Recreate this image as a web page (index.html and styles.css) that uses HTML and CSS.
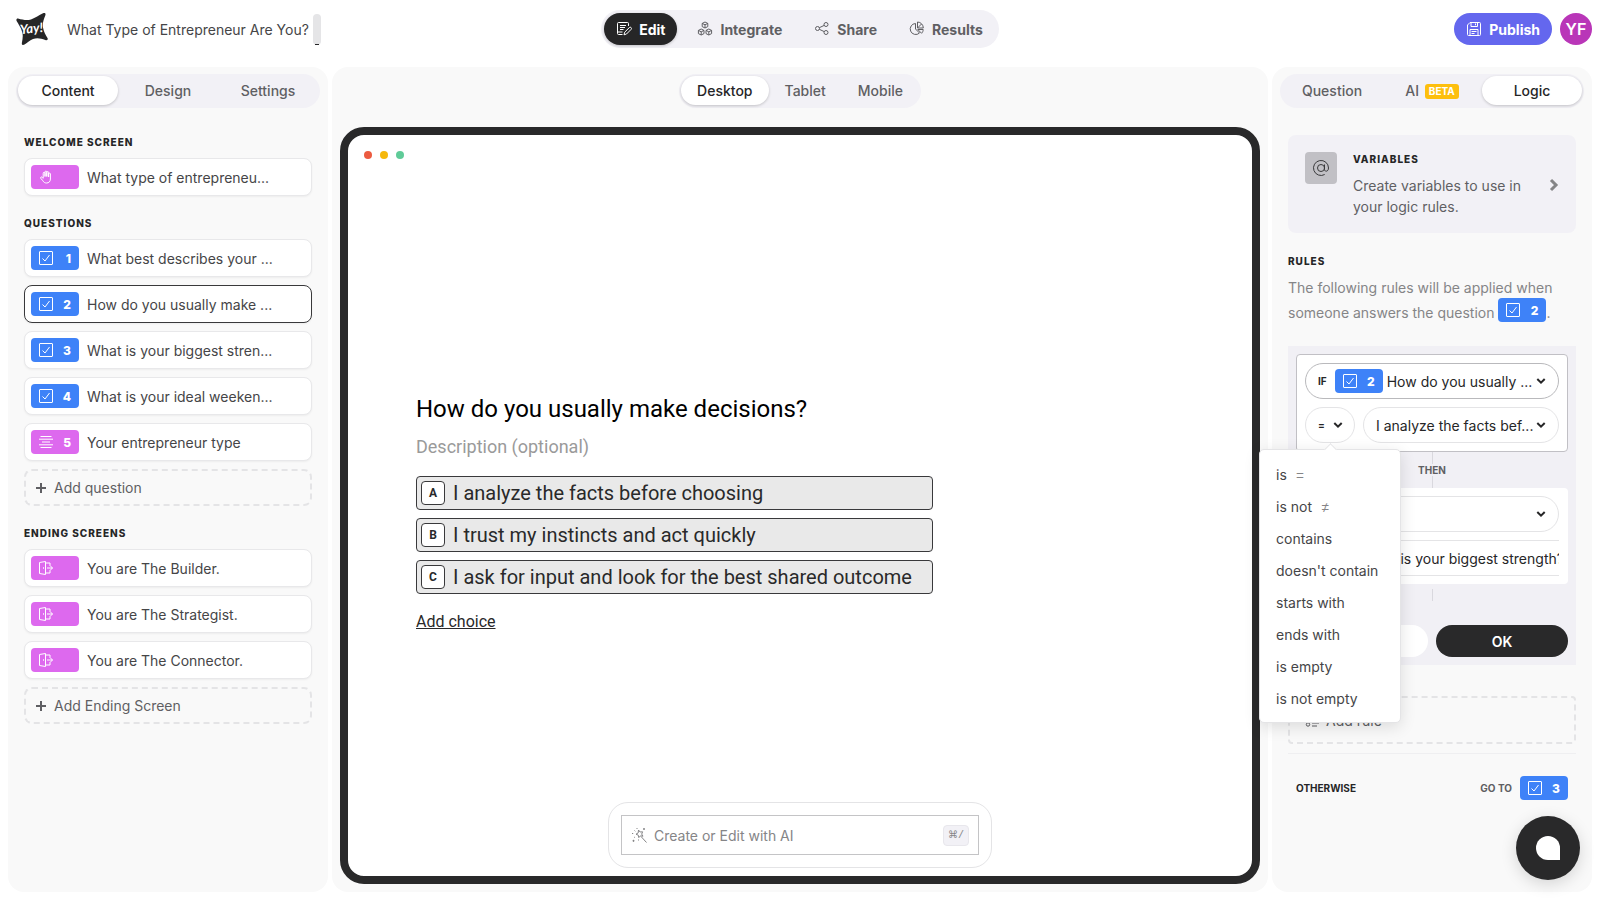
FILE: index.html
```html
<!DOCTYPE html>
<html lang="en">
<head>
    <meta charset="UTF-8">
    <meta name="viewport" content="width=device-width, initial-scale=1.0">
    <title>What Type of Entrepreneur Are You?</title>
    <link rel="stylesheet" href="styles.css">
</head>
<body>
    <!-- Icon sprite -->
    <svg class="sprite" aria-hidden="true">
        <symbol id="i-check" viewBox="0 0 14 14"><rect x=".5" y=".5" width="13" height="13" rx=".5"/><path d="M3.5 7.5 6 10l4.5-6"/></symbol>
        <symbol id="i-lines" viewBox="0 0 14 14"><path d="M1.500 1.500h11M0 4.200h14M3 7h8M0 9.800h14M1.500 12.500h11"/></symbol>
        <symbol id="i-hand" viewBox="0 0 14 14"><path d="M4.200 8V3.200a.9.9 0 0 1 1.800 0V6.500 2a.9.9 0 0 1 1.800 0v4.500-4a.9.9 0 0 1 1.800 0V7 4a.9.9 0 0 1 1.800 0v5c0 2.500-1.500 4-3.900 4-1.800 0-2.700-.7-3.600-2.200L1.700 8.200c-.5-1 .8-1.800 1.500-.9l1 1.300"/></symbol>
        <symbol id="i-door" viewBox="0 0 14 14"><path d="M.5 1.500 6.500.5v13l-6-1zM4.500 6.300v1.400M6.500 2h4.500v3M6.500 12h4.500V9M8 7h5.500M11.500 5l2 2-2 2"/></symbol>
        <symbol id="i-edit" viewBox="0 0 16 16"><path d="M6.500 13.500h-4a1 1 0 0 1-1-1v-10a1 1 0 0 1 1-1h9a1 1 0 0 1 1 1V5M1.500 11h5M4 4.500h6M4 6.500h5M4 8.500h3.500M8 13.800l.7-2.600 4.600-4.600a1.200 1.200 0 0 1 1.800 1.800l-4.600 4.600z"/></symbol>
        <symbol id="i-cubes" viewBox="0 0 16 16"><path d="m8 1 2.800 1.400v3.200L8 7 5.200 5.600V2.400zM5.200 2.400 8 3.800l2.800-1.400M8 3.800V7M4.200 8 7 9.400v3.200L4.200 14l-2.800-1.400V9.400zM1.400 9.400l2.800 1.400L7 9.400M4.200 10.800V14M11.800 8l2.800 1.400v3.200L11.800 14 9 12.600V9.400zM9 9.400l2.800 1.400 2.800-1.400M11.800 10.800V14"/></symbol>
        <symbol id="i-share" viewBox="0 0 16 16"><circle cx="3.500" cy="7.500" r="2"/><circle cx="12" cy="3.500" r="2"/><circle cx="12" cy="11.500" r="2"/><path d="m5.300 6.700 4.900-2.300M5.300 8.300l4.900 2.300"/></symbol>
        <symbol id="i-pie" viewBox="0 0 16 16"><path d="M6.500 2.500a5.500 5.500 0 1 0 4 9.500l-4-4zM8.500 1v6h5.800A6 6 0 0 0 8.500 1zM8.500 7l4-4M8.800 8.500h5.400c0 1.500-.6 2.800-1.600 3.800z"/></symbol>
        <symbol id="i-save" viewBox="0 0 16 16"><path d="M4 1.500h9.500a1 1 0 0 1 1 1v11a1 1 0 0 1-1 1h-11a1 1 0 0 1-1-1V4zM5 1.500v4h6.500v-4M9.500 2.500v1.800M4 14.500v-6h8v6M5.500 10.500h5M5.500 12.500h3"/></symbol>
        <symbol id="i-at" viewBox="0 0 18 18"><circle cx="9" cy="9" r="3.500"/><path d="M12.500 5.500v5c0 2.500 4 2.500 4-1.500A7.500 7.500 0 1 0 12.700 15.500"/></symbol>
        <symbol id="i-right" viewBox="0 0 10 14"><path d="m2 2 5 5-5 5"/></symbol>
        <symbol id="i-down" viewBox="0 0 10 10"><path d="m1.300 3 3.700 3.700L8.700 3"/></symbol>
        <symbol id="i-plus" viewBox="0 0 10 10"><path d="M5 0v10M0 5h10"/></symbol>
        <symbol id="i-wand" viewBox="0 0 16 16"><path d="m7.500 3 1.600 2 2.500-.2-.9 2.300 1.300 2.100-2.500-.4-1.700 1.800-.5-2.400-2.300-1 2.200-1.300zM10 9.500l5.500 6M13 1v2M12 2h2M2.500 12.800v2M1.500 13.800h2M6 1v1M1 6.500h1.200M3.500 3.500l.8.8M4 9.800l-.8.8M7.500 12.500v1"/></symbol>
        <symbol id="i-rule" viewBox="0 0 16 16"><circle cx="4" cy="12.500" r="1.700"/><path d="M1 3.500h6M4 1v5M9 3.500h6M1 8h14M8 11h7M8 14h5"/></symbol>
    </svg>

    <header class="topbar">
        <div class="topbar-left">
            <svg class="logo" viewBox="0 0 32 32" role="img" aria-label="Yay!">
                <path d="M2 5.500c5 1.500 9 2 13 1C19.500 5 23 2 27 .3c2-.8 3 .2 2.300 2.200-1.800 4.500-3 8-2.300 12 .7 4.500 2.700 7.500 4.500 10.500.8 1.800-.3 2.700-2.200 2-4.300-1.700-8.300-2.500-12.300-1-3.500 1.500-6 4-8.500 5.500-1.800 1-3 .2-2.600-1.800.8-4.200 1.400-7.700.1-11.200C5 14.500 2.300 11 .6 8 .1 6.300.7 5.200 2 5.500z"/>
                <text x="4" y="20" transform="rotate(-6 16 16)">Yay!</text>
            </svg>
            <input class="form-title" type="text" aria-label="Form title" value="What Type of Entrepreneur Are You?">
            <span class="scroll-thumb"></span>
        </div>
        <nav class="main-nav">
            <a class="active" href="#edit"><svg class="icon"><use href="#i-edit"/></svg>Edit</a>
            <a href="#integrate"><svg class="icon"><use href="#i-cubes"/></svg>Integrate</a>
            <a href="#share"><svg class="icon"><use href="#i-share"/></svg>Share</a>
            <a href="#results"><svg class="icon"><use href="#i-pie"/></svg>Results</a>
        </nav>
        <div class="topbar-right">
            <button class="publish" type="button"><svg class="icon"><use href="#i-save"/></svg>Publish</button>
            <button class="avatar" type="button">YF</button>
        </div>
    </header>

    <main class="workspace">
        <aside class="panel side">
            <div class="tabs">
                <button class="active" type="button">Content</button>
                <button type="button">Design</button>
                <button type="button">Settings</button>
            </div>

            <section class="group">
                <h2>Welcome Screen</h2>
                <button class="card" type="button"><span class="badge pink"><svg><use href="#i-hand"/></svg></span>What type of entrepreneu...</button>
            </section>

            <section class="group">
                <h2>Questions</h2>
                <button class="card" type="button"><span class="badge"><svg><use href="#i-check"/></svg>1</span>What best describes your ...</button>
                <button class="card selected" type="button"><span class="badge"><svg><use href="#i-check"/></svg>2</span>How do you usually make ...</button>
                <button class="card" type="button"><span class="badge"><svg><use href="#i-check"/></svg>3</span>What is your biggest stren...</button>
                <button class="card" type="button"><span class="badge"><svg><use href="#i-check"/></svg>4</span>What is your ideal weeken...</button>
                <button class="card" type="button"><span class="badge pink"><svg><use href="#i-lines"/></svg>5</span>Your entrepreneur type</button>
                <button class="add" type="button"><svg class="plus"><use href="#i-plus"/></svg>Add question</button>
            </section>

            <section class="group">
                <h2>Ending Screens</h2>
                <button class="card" type="button"><span class="badge pink"><svg><use href="#i-door"/></svg></span>You are The Builder.</button>
                <button class="card" type="button"><span class="badge pink"><svg><use href="#i-door"/></svg></span>You are The Strategist.</button>
                <button class="card" type="button"><span class="badge pink"><svg><use href="#i-door"/></svg></span>You are The Connector.</button>
                <button class="add" type="button"><svg class="plus"><use href="#i-plus"/></svg>Add Ending Screen</button>
            </section>
        </aside>

        <section class="panel canvas">
            <div class="tabs device-tabs">
                <button class="active" type="button">Desktop</button>
                <button type="button">Tablet</button>
                <button type="button">Mobile</button>
            </div>
            <div class="device">
                <div class="dots"><span class="red"></span><span class="yellow"></span><span class="green"></span></div>
                <div class="question">
                    <h1>How do you usually make decisions?</h1>
                    <p class="description">Description (optional)</p>
                    <ul class="choices">
                        <li><span class="key">A</span>I analyze the facts before choosing</li>
                        <li><span class="key">B</span>I trust my instincts and act quickly</li>
                        <li><span class="key">C</span>I ask for input and look for the best shared outcome</li>
                    </ul>
                    <a class="add-choice" href="#add-choice">Add choice</a>
                </div>
                <div class="ai-bar">
                    <label class="ai-field">
                        <svg class="icon"><use href="#i-wand"/></svg>
                        <input type="text" aria-label="Create or Edit with AI" placeholder="Create or Edit with AI">
                        <kbd>⌘/</kbd>
                    </label>
                </div>
            </div>
        </section>

        <aside class="panel side logic">
            <div class="tabs">
                <button type="button">Question</button>
                <button type="button">AI <span class="beta">BETA</span></button>
                <button class="active" type="button">Logic</button>
            </div>

            <a class="variables" href="#variables">
                <span class="at"><svg><use href="#i-at"/></svg></span>
                <span class="variables-text">
                    <strong>Variables</strong>
                    Create variables to use in your logic rules.
                </span>
                <svg class="chevron-right"><use href="#i-right"/></svg>
            </a>

            <section class="rules">
                <h2>Rules</h2>
                <p>The following rules will be applied when someone answers the question <span class="badge"><svg><use href="#i-check"/></svg>2</span>.</p>

                <div class="rule">
                    <div class="rule-card condition">
                        <label class="pill strong">
                            <span class="small">IF</span>
                            <span class="badge"><svg><use href="#i-check"/></svg>2</span>
                            <select aria-label="Question"><option>How do you usually ...</option></select>
                            <svg class="chevron"><use href="#i-down"/></svg>
                        </label>
                        <div class="pill-row">
                            <div class="operator">
                                <button class="pill" type="button" aria-label="Comparison"><span class="small">=</span><svg class="chevron"><use href="#i-down"/></svg></button>
                                <ul class="menu">
                                    <li><button type="button">is <span>=</span></button></li>
                                    <li><button type="button">is not <span>≠</span></button></li>
                                    <li><button type="button">contains</button></li>
                                    <li><button type="button">doesn't contain</button></li>
                                    <li><button type="button">starts with</button></li>
                                    <li><button type="button">ends with</button></li>
                                    <li><button type="button">is empty</button></li>
                                    <li><button type="button">is not empty</button></li>
                                </ul>
                            </div>
                            <label class="pill value">
                                <select aria-label="Answer"><option>I analyze the facts bef...</option></select>
                                <svg class="chevron"><use href="#i-down"/></svg>
                            </label>
                        </div>
                    </div>
                    <div class="then">THEN</div>
                    <div class="rule-card action">
                        <label class="pill">
                            <select aria-label="Action"><option>Go to</option></select>
                            <svg class="chevron"><use href="#i-down"/></svg>
                        </label>
                        <div class="clip">
                            <button class="pill target" type="button"><span class="badge"><svg><use href="#i-check"/></svg>3</span>What is your biggest strength?</button>
                        </div>
                    </div>
                    <div class="tail"></div>
                    <div class="rule-actions">
                        <button type="button">Cancel</button>
                        <button class="ok" type="button">OK</button>
                    </div>
                </div>

                <button class="add add-rule" type="button"><svg class="icon"><use href="#i-rule"/></svg>Add rule</button>
                <div class="otherwise">
                    <strong>OTHERWISE</strong>
                    <span>GO TO</span>
                    <span class="badge"><svg><use href="#i-check"/></svg>3</span>
                </div>
            </section>
        </aside>
    </main>

    <button class="chat" type="button" aria-label="Open chat"><span></span></button>
</body>
</html>
```

FILE: styles.css
```css
* {
    box-sizing: border-box;
}

body {
    display: flex;
    flex-direction: column;
    min-height: 100vh;
    margin: 0;
    padding-bottom: 8px;
    background: #fff;
    color: #454547;
    font-family: Inter, "Liberation Sans", sans-serif;
    font-size: 14px;
    line-height: 21px;
}

button, input, select {
    margin: 0;
    padding: 0;
    border: none;
    background: none;
    color: inherit;
    font: inherit;
}

button {
    cursor: pointer;
}

a {
    color: inherit;
    text-decoration: none;
}

h1, h2, p, ul {
    margin: 0;
    padding: 0;
    list-style: none;
}

svg {
    flex: none;
    fill: none;
    stroke: currentColor;
    stroke-width: 1;
}

.sprite {
    position: absolute;
    width: 0;
    height: 0;
}

.icon {
    width: 16px;
    height: 16px;
}

/* Top bar */
.topbar {
    display: grid;
    grid-template-columns: 1fr auto 1fr;
    align-items: center;
    padding: 10px 8px 19px;
}

.topbar-left {
    display: flex;
    align-items: center;
    padding-left: 8px;
}

.logo {
    width: 32px;
    height: 32px;
    margin-right: 19px;
}

.logo path {
    fill: #262627;
    stroke: none;
}

.logo text {
    fill: #fff;
    stroke: none;
    font: italic bold 13px Lato, sans-serif;
}

.form-title {
    width: 246px;
    height: 32px;
}

.scroll-thumb {
    display: flex;
    align-items: flex-end;
    justify-content: center;
    width: 8px;
    height: 31px;
    border-radius: 4px;
    background: #e5e5e7;
}

.scroll-thumb::after {
    content: "";
    width: 4px;
    height: 1px;
    background: #262627;
}

.main-nav {
    display: flex;
    gap: 8px;
    padding: 3px 4px 3px 3px;
    border-radius: 20px;
    background: #f2f1f6;
    color: #5f5f63;
    font-weight: 700;
}

.main-nav a {
    display: flex;
    align-items: center;
    gap: 7px;
    height: 32px;
    padding: 0 12px;
    border-radius: 16px;
}

.main-nav .active {
    background: #262627;
    color: #fff;
    box-shadow: 0 1px 3px rgba(0, 0, 0, 0.2);
}

.topbar-right {
    display: flex;
    justify-content: flex-end;
    gap: 8px;
}

.publish {
    display: flex;
    align-items: center;
    gap: 7px;
    height: 32px;
    padding: 0 12px;
    border-radius: 16px;
    background: #6467ee;
    color: #fff;
    font-weight: 700;
}

.avatar {
    width: 32px;
    height: 32px;
    border-radius: 50%;
    background: #b936b8;
    color: #fff;
    font-size: 16px;
    font-weight: 600;
}

/* Panels */
.workspace {
    display: grid;
    flex: 1;
    grid-template-columns: 320px 1fr 320px;
    gap: 4px;
    padding: 0 8px;
}

.panel {
    min-width: 0;
    padding: 7px 8px 0;
    border-radius: 16px;
    background: #f9f9f9;
}

.side {
    padding: 7px 16px 0;
}

.tabs {
    display: flex;
    margin: 0 -8px;
    padding: 2px 2px 3px;
    border-radius: 17px;
    background: #f2f1f6;
    color: #5f5f63;
    font-weight: 500;
}

.tabs button {
    flex: 1;
    height: 29px;
    border-radius: 15px;
}

.tabs .active {
    background: #fff;
    color: #262627;
    box-shadow: 0 1px 3px rgba(0, 0, 0, 0.2);
}

.beta {
    display: inline-block;
    margin-left: 2px;
    padding: 0 4px;
    border-radius: 3px;
    background: #fdbf0d;
    color: #fff;
    font-size: 10px;
    font-weight: 700;
    line-height: 15px;
    vertical-align: 1px;
}

h2, .variables strong {
    color: #262627;
    font-size: 10px;
    font-weight: 800;
    letter-spacing: 1px;
    line-height: 15px;
    text-transform: uppercase;
}

/* Content list */
.group {
    display: flex;
    flex-direction: column;
    gap: 8px;
    margin-top: 20px;
}

.tabs + .group {
    margin-top: 27px;
}

.card, .add {
    display: flex;
    align-items: center;
    height: 38px;
    border: 1px solid #e8e8ea;
    border-radius: 8px;
    white-space: nowrap;
}

.card {
    gap: 8px;
    padding: 0 6px;
    background: #fff;
    box-shadow: 0 1px 2px rgba(0, 0, 0, 0.05);
}

.card.selected {
    border-color: #39393b;
}

.badge {
    display: inline-flex;
    flex: none;
    align-items: center;
    justify-content: space-between;
    width: 48px;
    height: 24px;
    padding: 0 8px;
    border-radius: 4px;
    background: #3e82f8;
    color: #fff;
    font-size: 12px;
    font-weight: 800;
}

.badge svg {
    width: 14px;
    height: 14px;
}

.badge.pink {
    background: #dd69ee;
}

.add {
    gap: 8px;
    height: 37px;
    padding: 0 10px;
    border: 2px dashed #e4e4e6;
    color: #5f5f63;
}

.plus {
    width: 10px;
    height: 10px;
    stroke-width: 2;
}

/* Preview */
.canvas {
    display: flex;
    flex-direction: column;
    padding-bottom: 8px;
}

.device-tabs {
    align-self: center;
    margin: 0 0 19px;
}

.device-tabs button {
    padding: 0 16px;
}

.device {
    position: relative;
    display: flex;
    flex: 1;
    flex-direction: column;
    border: 8px solid #29292a;
    border-radius: 24px;
    background: #fff;
}

.dots {
    display: flex;
    gap: 8px;
    padding: 16px;
}

.dots span {
    width: 8px;
    height: 8px;
    border-radius: 50%;
}

.red {
    background: #ec5b40;
}

.yellow {
    background: #f5b80c;
}

.green {
    background: #5fcb98;
}

.question {
    display: flex;
    flex: 1;
    flex-direction: column;
    justify-content: center;
    align-items: flex-start;
    padding: 0 68px 26px;
    color: #29292a;
    font-family: Roboto, sans-serif;
}

.question h1 {
    color: #000;
    font-size: 24px;
    font-weight: 400;
    line-height: 32px;
}

.description {
    margin: 9px 0 16px;
    color: #9a9a9a;
    font-size: 18px;
    line-height: 26px;
}

.choices {
    display: flex;
    flex-direction: column;
    gap: 8px;
    width: 100%;
    max-width: 517px;
}

.choices li {
    display: flex;
    align-items: center;
    gap: 8px;
    height: 34px;
    padding: 0 4px;
    border: 1px solid #39393b;
    border-radius: 4px;
    background: #e9e9e9;
    font-size: 20px;
}

.key {
    width: 24px;
    height: 24px;
    border: 1px solid #39393b;
    border-radius: 4px;
    background: #fff;
    font-size: 12px;
    font-weight: 700;
    line-height: 22px;
    text-align: center;
}

.add-choice {
    margin-top: 17px;
    font-size: 16px;
    text-decoration: underline;
}

/* Floats over the bottom of the preview */
.ai-bar {
    position: absolute;
    bottom: 8px;
    left: 50%;
    width: 384px;
    padding: 12px;
    border: 1px solid #e4e4e6;
    border-radius: 20px;
    background: #fff;
    transform: translateX(-50%);
}

.ai-field {
    display: flex;
    align-items: center;
    gap: 7px;
    height: 40px;
    padding: 0 9px;
    border: 1px solid #c4c4c6;
    color: #858587;
}

.ai-field input {
    flex: 1;
    min-width: 0;
}

.ai-field input::placeholder {
    color: #858587;
}

kbd {
    width: 26px;
    height: 21px;
    border: 1px solid #e8e7ec;
    border-radius: 4px;
    background: #f2f1f6;
    font: 10px/19px "Liberation Mono", "DejaVu Sans", monospace;
    text-align: center;
}

/* Logic */
.variables {
    display: flex;
    align-items: center;
    gap: 16px;
    margin-top: 27px;
    padding: 17px 17px 16px;
    border-radius: 8px;
    background: #f2f1f6;
    color: #5f5f63;
}

.at {
    display: flex;
    align-self: flex-start;
    align-items: center;
    justify-content: center;
    width: 32px;
    height: 32px;
    border-radius: 4px;
    background: #c1c0c5;
    color: #39393b;
}

.at svg {
    width: 18px;
    height: 18px;
}

.variables-text {
    flex: 1;
}

.variables strong {
    display: block;
    margin-bottom: 8px;
}

.chevron-right {
    width: 10px;
    height: 14px;
    color: #858587;
    stroke-width: 3;
}

.rules {
    margin-top: 21px;
}

.rules p {
    margin: 8px 0 23px;
    color: #858587;
}

.rules p .badge {
    vertical-align: 1px;
}

.rule {
    padding: 8px;
    background: #f1f0f5;
}

.rule-card {
    display: flex;
    flex-direction: column;
    gap: 8px;
    padding: 8px;
    border-radius: 4px;
    background: #fff;
}

.condition {
    border: 1px solid #c1c0c5;
}

.action {
    padding: 8px 9px;
}

.pill {
    display: flex;
    align-items: center;
    gap: 8px;
    width: 100%;
    height: 36px;
    padding: 0 12px;
    border: 1px solid #e4e4e6;
    border-radius: 18px;
    background: #fff;
    color: #262627;
}

.pill.strong {
    gap: 4px;
    border-color: #b9b9bc;
}

.pill select {
    flex: 1;
    min-width: 0;
    appearance: none;
}

.pill-row {
    display: flex;
    gap: 8px;
}

.operator {
    position: relative;
    flex: none;
    width: 50px;
}

.value {
    flex: 1;
    gap: 0;
    min-width: 0;
}

.small {
    font-size: 10px;
    font-weight: 700;
}

.pill.strong .small {
    margin-right: 4px;
}

.chevron {
    width: 10px;
    height: 10px;
    stroke-width: 2;
}

.menu {
    position: absolute;
    z-index: 2;
    top: 42px;
    left: 50%;
    width: 142px;
    padding: 8px 0;
    border: 1px solid #e4e4e6;
    border-radius: 5px;
    background: #fff;
    box-shadow: 0 4px 16px rgba(0, 0, 0, 0.12);
    transform: translateX(-50%);
}

.menu::before {
    content: "";
    position: absolute;
    top: -5px;
    left: 66px;
    width: 8px;
    height: 8px;
    border: 1px solid #e4e4e6;
    border-width: 1px 0 0 1px;
    background: #fff;
    transform: rotate(45deg);
}

.menu button {
    display: flex;
    align-items: center;
    gap: 8px;
    width: 100%;
    height: 32px;
    padding: 0 16px;
    white-space: nowrap;
}

.menu span {
    color: #858587;
    font-size: 16px;
    font-weight: 300;
}

.then {
    display: flex;
    flex-direction: column;
    align-items: center;
    color: #5f5f63;
    font-size: 10px;
    font-weight: 700;
    line-height: 12px;
}

.then::before, .then::after, .tail::before {
    content: "";
    width: 1px;
    height: 12px;
    background: #d9d8de;
}

.clip {
    overflow: hidden;
}

.target {
    gap: 2px;
    width: 288px;
    padding: 0 6px;
    white-space: nowrap;
}

.tail {
    display: flex;
    justify-content: center;
    padding: 5px 0 24px;
}

.rule-actions {
    display: flex;
    gap: 8px;
}

.rule-actions button {
    flex: 1;
    height: 32px;
    border-radius: 16px;
    background: #fff;
    font-weight: 600;
}

.rule-actions .ok {
    background: #29292a;
    color: #fff;
}

.add-rule {
    gap: 6px;
    width: 100%;
    height: 48px;
    margin: 31px 0 9px;
    padding: 0 14px;
    border-radius: 4px;
}

.otherwise {
    display: flex;
    align-items: center;
    gap: 8px;
    padding: 22px 8px;
    border-top: 1px solid #efeff1;
    color: #5f5f63;
    font-size: 10px;
    font-weight: 700;
}

.otherwise strong {
    flex: 1;
    color: #262627;
    font-weight: 700;
}

.chat {
    position: fixed;
    right: 20px;
    bottom: 20px;
    display: flex;
    align-items: center;
    justify-content: center;
    width: 64px;
    height: 64px;
    border-radius: 50%;
    background: #29292a;
    box-shadow: 0 4px 16px rgba(0, 0, 0, 0.15);
}

.chat span {
    width: 24px;
    height: 24px;
    border-radius: 12px 12px 0 12px;
    background: #fff;
}
```
